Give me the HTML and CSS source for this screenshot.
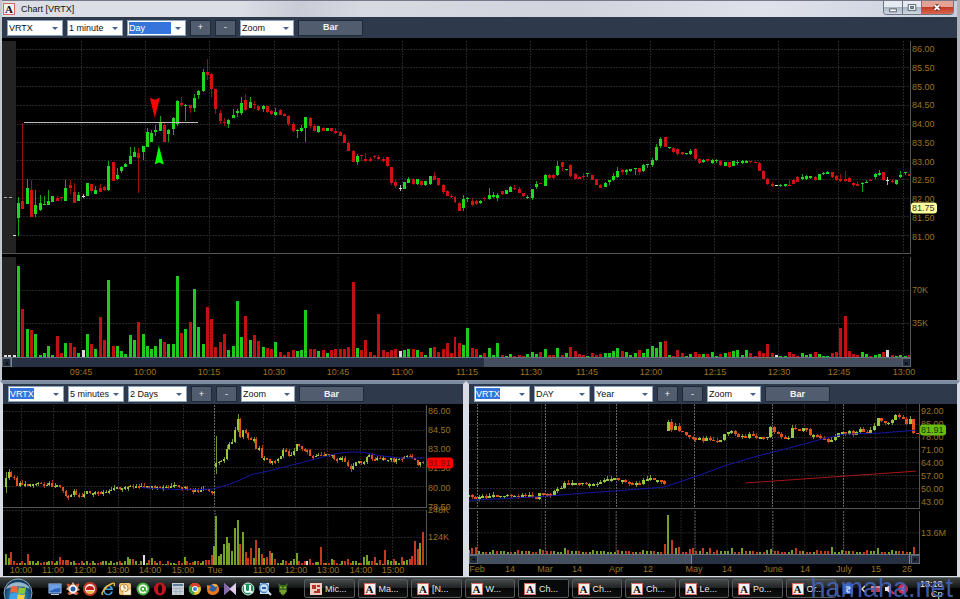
FILE: index.html
```html
<!DOCTYPE html>
<html lang="en">
<head>
<meta charset="utf-8">
<title>Chart [VRTX]</title>
<link rel="stylesheet" href="styles.css">
</head>
<body>
<main class="window">
  <header class="titlebar">
    <span class="app-icon">A</span>
    <h1>Chart [VRTX]</h1>
    <div class="window-buttons">
      <button class="win" aria-label="Minimize"><svg viewBox="0 0 19 13"><rect x="6" y="8" width="7" height="3" fill="#fff" stroke="#555f6c"/></svg></button>
      <button class="win" aria-label="Restore"><svg viewBox="0 0 19 13"><rect x="5.500" y="3.500" width="8" height="6" fill="#fff" stroke="#555f6c"/><rect x="8" y="5.500" width="3" height="2" fill="#8c98a6" stroke="#555f6c"/></svg></button>
      <button class="win close" aria-label="Close"><svg viewBox="0 0 32 13"><path d="M13 4l5 5M18 4l-5 5" stroke="#6b2a24" stroke-width="4"/><path d="M13 4l5 5M18 4l-5 5" stroke="#fff" stroke-width="2"/></svg></button>
    </div>
  </header>
  <form class="toolbar">
    <label class="combo"><select aria-label="Symbol"><option>VRTX</option></select></label>
    <label class="combo"><select aria-label="Interval"><option>1 minute</option></select></label>
    <label class="combo wide focused"><select aria-label="Range"><option>Day</option></select></label>
    <button type="button" class="step">+</button>
    <button type="button" class="step">-</button>
    <label class="combo zoom"><select aria-label="Zoom"><option>Zoom</option></select></label>
    <button type="button" class="bar">Bar</button>
  </form>
  <section class="chart chart-main" id="main"></section>
</main>

<div class="panels">
  <section class="panel">
    <form class="toolbar">
      <label class="combo marked"><select aria-label="Symbol"><option>VRTX</option></select></label>
      <label class="combo"><select aria-label="Interval"><option>5 minutes</option></select></label>
      <label class="combo wide"><select aria-label="Range"><option>2 Days</option></select></label>
      <button type="button" class="step">+</button>
      <button type="button" class="step">-</button>
      <label class="combo zoom"><select aria-label="Zoom"><option>Zoom</option></select></label>
      <button type="button" class="bar">Bar</button>
    </form>
    <div class="chart chart-days" id="days"></div>
  </section>
  <section class="panel">
    <form class="toolbar">
      <label class="combo marked"><select aria-label="Symbol"><option>VRTX</option></select></label>
      <label class="combo"><select aria-label="Interval"><option>DAY</option></select></label>
      <label class="combo wide"><select aria-label="Range"><option>Year</option></select></label>
      <button type="button" class="step">+</button>
      <button type="button" class="step">-</button>
      <label class="combo zoom"><select aria-label="Zoom"><option>Zoom</option></select></label>
      <button type="button" class="bar">Bar</button>
    </form>
    <div class="chart chart-year" id="year"></div>
  </section>
</div>

<footer class="taskbar">
  <button class="start" aria-label="Start">
    <svg viewBox="0 0 30 30">
      <defs><radialGradient id="orb" cx=".5" cy=".6" r=".6"><stop offset="0" stop-color="#49b7ea"/><stop offset=".6" stop-color="#1f5f92"/><stop offset="1" stop-color="#0d2b49"/></radialGradient></defs>
      <circle cx="15" cy="15" r="14" fill="url(#orb)" stroke="#8fa9b8"/>
      <path d="M3 11C6 2 24 2 27 11C19 7 11 8 3 11z" fill="#cfe2ec" opacity=".7"/>
      <path d="M8 9q4-2 7 0l-1 6q-3-2-7 0z" fill="#e8683a"/>
      <path d="M16 9q4 2 7 0l-1 6q-4 2-7 0z" fill="#8cc63e"/>
      <path d="M7 16q4-2 7 0l-1 6q-3-2-7 0z" fill="#3fa0e6"/>
      <path d="M15 16q3 2 7 0l-1 6q-4 2-7 0z" fill="#fbd03c"/>
    </svg>
  </button>
  <nav class="quick" aria-label="Quick launch">
    <svg viewBox="0 0 14 14"><rect x="1" y="2" width="12" height="9" fill="#2d62b8" stroke="#9fc4ee"/><path d="M2 3h10v3q-5 0-10 3z" fill="#6ba0e4"/><path d="M3 12.500h8" stroke="#b9d0e8"/></svg>
    <svg viewBox="0 0 14 14"><path d="M7 0l2 3 4-1-1 4 2 2-3 1 0 4-4-1-4 1 0-4-3-2 2-2-1-3 4 1z" fill="#e8a888"/><circle cx="7" cy="7" r="4" fill="#fff"/><circle cx="7" cy="7" r="2.500" fill="#265fa8"/><path d="M1 2l3 2M13 2l-3 2M2 12l2-2M12 12l-2-2" stroke="#d84a28" stroke-width="2"/></svg>
    <svg viewBox="0 0 14 14"><circle cx="7" cy="7" r="6" fill="#f4e8dc" stroke="#c33a26" stroke-width="2"/><path d="M3 8a4 4 0 0 1 8 0z" fill="#b9201c"/><path d="M3 9h8l-3 3H6z" fill="#e9b83c"/></svg>
    <svg viewBox="0 0 14 14"><path d="M12 8H4a3 3 0 0 0 6 1.500h2A5 5 0 1 1 12 7z" fill="#3f9fe8"/><path d="M4.500 6.500h5a2.500 2.500 0 0 0-5 0z" fill="#0a0c10"/><path d="M2 12C-1 14 3 5 10 2c4-2 4 0 3 2" fill="none" stroke="#edb93e" stroke-width="1.500"/></svg>
    <svg viewBox="0 0 14 14"><rect x="1" y="1" width="12" height="12" rx="2" fill="#f0c678"/><circle cx="6" cy="6" r="4" fill="#fff7df" stroke="#c98a3a"/><path d="M6 3v3h2" fill="none" stroke="#b2661a"/><path d="M5 8l3 2 5-4v7H5z" fill="#fff3d0" stroke="#bd7a2a" stroke-width=".5"/></svg>
    <svg viewBox="0 0 14 14"><circle cx="7" cy="7" r="6.500" fill="#45b23b"/><circle cx="7" cy="7" r="4.500" fill="#fff"/><circle cx="7" cy="7" r="2" fill="none" stroke="#38a530" stroke-width="1.500"/><path d="M9 5v4h2" fill="none" stroke="#38a530"/></svg>
    <svg viewBox="0 0 14 14"><ellipse cx="7" cy="7" rx="6" ry="6.500" fill="#c3161c"/><ellipse cx="7" cy="7" rx="2" ry="4.500" fill="#140506"/></svg>
    <svg viewBox="0 0 14 14"><rect x="1" y="1" width="12" height="12" fill="#c7d0d8"/><path d="M2 2h10v2H2z" fill="#5f7d98"/><path d="M2 6.500h10M2 9.500h10M5 5v8M9 5v8" stroke="#a4b0bb"/></svg>
    <svg viewBox="0 0 14 14"><circle cx="7" cy="7" r="6" fill="#e8c733"/><path d="M7 7L2 3.500A6 6 0 0 1 12.500 4.500z" fill="#d93d2e"/><path d="M7 7L2 3.500A6 6 0 0 0 6 13z" fill="#3f9e44"/><circle cx="7" cy="7" r="3" fill="#fff"/><circle cx="7" cy="7" r="2" fill="#3d7fd6"/></svg>
    <svg viewBox="0 0 14 14"><circle cx="7" cy="7" r="5" fill="#2c5fa8"/><path d="M1 3q3 0 4 2l-2 2q2 4 6 2 3-3 1-7 4 3 3 7-2 4-6 4-6 0-6-6z" fill="#e8771d"/><path d="M6 2q4-1 6 2l-3 1z" fill="#f6ad3b"/></svg>
    <svg viewBox="0 0 14 14"><path d="M1 1l6 5 6-5v12L7 8l-6 5z" fill="#b49ac8"/><path d="M1 1l6 6-6 6z" fill="#8667a8"/><path d="M13 1L7 7l6 6z" fill="#dacbe6"/></svg>
    <svg viewBox="0 0 14 14"><circle cx="7" cy="7" r="6" fill="#1e8f5f" stroke="#d8eee2"/><path d="M4 3v5q0 2 2.500 2T9 8V3M9 9q1 2 3 1" fill="none" stroke="#fff" stroke-width="2"/></svg>
    <svg viewBox="0 0 14 14"><rect x="2" y="1" width="9" height="11" fill="#d8e7f3"/><circle cx="6" cy="6" r="4.500" fill="#c5def4" stroke="#4c8ac8" stroke-width="1.500"/><path d="M4 6h4" stroke="#27639f" stroke-width="2"/><path d="M9 9l4 4" stroke="#d7e5f0" stroke-width="2"/></svg>
    <svg viewBox="0 0 14 14"><path d="M2 1l3 2h4l3-2-1 4v5l-4 4-4-4V5z" fill="#3c6a1f"/><path d="M4 5l2 1M10 5L8 6M4 9h6M5 11h4" stroke="#b2d43c"/></svg>
  </nav>
  <nav class="tasks" aria-label="Running programs">
    <button class="task"><svg class="task-icon" viewBox="0 0 12 12"><rect width="12" height="12" fill="#f3c8bf"/><path d="M2 2h4v4H2zM7 2h3v2H7zM7 6h3v4H4V8h3z" fill="#b83228"/></svg>Mic...</button>
    <button class="task"><span class="app-icon">A</span>Ma...</button>
    <button class="task"><span class="app-icon">A</span>[N...</button>
    <button class="task"><span class="app-icon">A</span>W...</button>
    <button class="task active"><span class="app-icon">A</span>Ch...</button>
    <button class="task"><span class="app-icon">A</span>Ch...</button>
    <button class="task"><span class="app-icon">A</span>Ch...</button>
    <button class="task"><span class="app-icon">A</span>Le...</button>
    <button class="task"><span class="app-icon">A</span>Po...</button>
    <button class="task"><span class="app-icon">A</span>Or...</button>
  </nav>
  <div class="tray">
    <svg class="tray-icons" viewBox="0 0 70 14"><rect x="1" y="2" width="10" height="10" fill="#2b70d0"/><path d="M4 5h4v2H5v3h3" fill="none" stroke="#fff"/><path d="M23 4l-3 3 3 3" fill="none" stroke="#ddd" stroke-width="1.500"/><path d="M29 4h9v6h-9z" fill="#c33b48"/><path d="M29 5h9" stroke="#ddd"/><path d="M43 5h2l4-3v10l-4-3h-2z" fill="#e8e8ee"/><path d="M49 9l3 3" stroke="#e2303c" stroke-width="2"/><circle cx="61" cy="7" r="5" fill="#d02850"/><circle cx="61" cy="7" r="2" fill="#8b9bd6"/></svg>
    <time class="clock">13:18<br>Ср</time>
  </div>
  <span class="watermark">hamaha.net</span>
</footer>
<script src="charts.js"></script>
</body>
</html>
```
FILE: styles.css
```css
* { box-sizing: border-box; }

body {
  margin: 0;
  height: 100vh;
  display: grid;
  grid-template-rows: 381fr 196fr 22px;
  background: #000;
  color: #111;
  font: 9px/12px "Liberation Sans", sans-serif;
  overflow: hidden;
}

button, select { font: inherit; margin: 0; }

.window {
  display: flex;
  flex-direction: column;
  min-height: 0;
  border-left: 2px solid #c3c7ce;
  border-right: 3px solid #aeb2b9;
  border-bottom: 1px solid #8997ab;
}

.titlebar {
  display: flex;
  align-items: center;
  gap: 6px;
  height: 17px;
  padding-left: 1px;
  border-top: 1px solid #77798b;
  background: linear-gradient(100deg, #dcdee6 0 25%, #c9ccd6 31%, #d8dae2 38%, #d2d4dd 60%, #dfe2ea 80%, #c9d0dc);
}

.titlebar h1 { margin: 0; flex: 1; font-size: 9px; font-weight: 400; }

.app-icon {
  flex: none;
  width: 12px;
  height: 12px;
  border: 1px solid #d66a62;
  background: #f7f0ef;
  color: #111;
  font: bold 11px/11px "Liberation Serif", serif;
  text-align: center;
}

.window-buttons {
  display: flex;
  align-self: flex-start;
  margin-right: 3px;
  border: 1px solid #6c7683;
  border-top: 0;
  border-radius: 0 0 4px 4px;
  overflow: hidden;
}

.win {
  width: 19px;
  height: 13px;
  padding: 0;
  border: 0;
  border-right: 1px solid #6c7683;
  background: linear-gradient(#e6ebf1 45%, #aab6c4 50%, #cfd9e3);
}
.win svg { display: block; width: 100%; height: 100%; }
.win.close { width: 31px; border: 0; background: linear-gradient(#e3a294 45%, #c03c26 50%, #d9684c); }

.toolbar {
  display: flex;
  align-items: center;
  gap: 4px;
  flex: none;
  height: 21px;
  padding: 0 5px;
  background: #2e3a4b;
}

.combo {
  position: relative;
  width: 56px;
  height: 16px;
  border: 1px solid #8ba3bf;
  background: #fff;
}
.combo.wide { width: 59px; }
.combo.zoom { width: 54px; }
.combo select {
  display: block;
  width: 100%;
  height: 14px;
  padding: 0 0 0 1px;
  border: 0;
  border-radius: 0;
  appearance: none;
  background: transparent;
  color: #111;
  line-height: 14px;
}
.combo::after {
  content: "";
  position: absolute;
  right: 4px;
  top: 6px;
  border: 3px solid transparent;
  border-top-color: #46618f;
  border-bottom: 0;
}
.focused select { background: linear-gradient(#3475dc, #3475dc) 1px 1px / 42px 12px no-repeat; color: #fff; }
.marked select { background: linear-gradient(#3475dc, #3475dc) 1px 1px / 24px 11px no-repeat; color: #fff; }

.step, .bar {
  height: 16px;
  padding: 0;
  border: 1px solid #1f2937;
  border-radius: 0;
  background: #515d6e;
  color: #f2f4f7;
  line-height: 13px;
}
.step { width: 21px; }
.bar { width: 65px; font-weight: 700; }

.chart {
  flex: 1;
  display: grid;
  min-height: 0;
  background: #000;
}
.chart-main { grid-template: 213fr 3px 100fr 10px 13px / 1fr 46px; padding-top: 3px; }
.chart-days { grid-template: 103fr 2px 55fr 11px / 1fr 36px; padding-top: 1px; }
.chart-year { grid-template: 104fr 2px 43fr 10px 12px / 1fr 37px; }

.plot {
  grid-column: 1;
  display: block;
  width: 100%;
  height: 100%;
  min-height: 0;
  border-right: 1px solid #555;
  shape-rendering: crispEdges;
}
.plot.price { grid-row: 1; border-bottom: 1px solid #555; }
.plot.volume { grid-row: 3; }
.grid { stroke: #262626; stroke-dasharray: 2 1; fill: none; }
.grid.bright { stroke: #6a6a6a; }
.average { fill: none; shape-rendering: auto; }

.axis { position: relative; grid-column: 2; color: #9b7320; }
.axis.price { grid-row: 1; }
.axis.volume { grid-row: 3; }
.axis span { position: absolute; left: 1px; transform: translateY(-50%); white-space: nowrap; }
.axis .last { left: 0; padding: 0 2px 0 1px; border-radius: 3px; line-height: 11px; z-index: 1; }
.last.yellow { background: #ffff9c; color: #333; }
.last.red { background: #f00; color: #7a0c0c; }
.last.green { background: #68bd0c; color: #16360a; }

.times { position: relative; grid-column: 1; color: #9b7320; }
.times span { position: absolute; transform: translateX(-50%); line-height: 11px; white-space: nowrap; }

.scroll {
  grid-column: 1;
  grid-row: 4;
  display: flex;
  border-top: 1px solid #66717f;
  background: #444f60;
}
.scroll i { display: block; border-left: 1px solid #7b8796; background: #263143; }
.scroll i.gap { border: 0; background: none; }
.scroll button {
  flex: none;
  width: 9px;
  height: 9px;
  padding: 0;
  border: 1px solid #5b6675;
  background: #202a39;
  color: #05080d;
  font-size: 6px;
  line-height: 6px;
}

.panels {
  display: grid;
  grid-template-columns: 466fr 494fr;
  min-height: 0;
  background: #d7dce5;
}
.panel {
  display: flex;
  flex-direction: column;
  min-width: 0;
  min-height: 0;
  border: 3px solid #d7dce5;
  border-top-color: #7d8ca1;
  border-bottom-width: 1px;
}
.panel .toolbar { height: 20px; }

.taskbar {
  position: relative;
  display: flex;
  align-items: center;
  border-top: 1px solid #646a6a;
  background: linear-gradient(#3b4040, #151818 45%, #000 50%);
  color: #eee;
  overflow: hidden;
}
.start { flex: none; align-self: flex-start; width: 30px; height: 30px; margin: 0 14px 0 3px; padding: 0; border: 0; background: none; }
.start svg { display: block; }
.quick { display: flex; flex: none; width: 243px; justify-content: space-between; padding-left: 1px; }
.quick svg { width: 14px; height: 14px; }
.tasks { display: flex; gap: 3px; margin-left: 14px; flex: 1; min-width: 0; max-width: 532px; }
.task {
  display: flex;
  align-items: center;
  gap: 3px;
  flex: 1;
  min-width: 0;
  height: 19px;
  padding: 0 5px;
  border: 1px solid #555b5b;
  border-radius: 2px;
  background: linear-gradient(#444949, #202323 45%, #050606 50%, #111);
  color: #e8e8e8;
}
.task.active { background: #08090a; }
.task-icon { width: 12px; height: 12px; flex: none; }
.tray { display: flex; align-items: center; gap: 8px; margin-left: 6px; }
.tray-icons { width: 70px; height: 14px; }
.clock { line-height: 10px; text-align: right; }
.watermark {
  position: absolute;
  right: 7px;
  bottom: 0;
  color: #4560b4;
  font: 27px/22px "Liberation Sans", sans-serif;
  opacity: .9;
}
```
FILE: charts.js
```js
const NS = "http://www.w3.org/2000/svg";

function add(parent, tag, attrs) {
  const node = document.createElementNS(NS, tag);
  for (const key in attrs) node.setAttribute(key, attrs[key]);
  parent.appendChild(node);
  return node;
}

/* A pane is one scaled drawing area: box is [x, y, width, height]. */
function pane(host, kind, box, xs, bright, ys) {
  const svg = add(host, "svg", { class: "plot " + kind, viewBox: box.join(" "), preserveAspectRatio: "none" });
  const [x0, y0, w, h] = box;
  ys.forEach(y => add(svg, "path", { class: "grid", d: `M${x0} ${Math.floor(y) + .5}H${x0 + w}` }));
  xs.forEach(x => add(svg, "path", { class: "grid", d: `M${Math.floor(x) + .5} ${y0}V${y0 + h}` }));
  bright.forEach(x => add(svg, "path", { class: "grid bright", d: `M${Math.floor(x) + .5} ${y0}V${y0 + h}` }));
  return svg;
}

function axis(host, kind, box, labels, last) {
  const div = document.createElement("div");
  div.className = "axis " + kind;
  labels.concat(last ? [last] : []).forEach(([y, text, tone]) => {
    const s = document.createElement("span");
    s.textContent = text;
    if (tone) s.className = "last " + tone;
    s.style.top = (y - box[1]) / box[3] * 100 + "%";
    div.appendChild(s);
  });
  host.appendChild(div);
}

function times(host, box, labels, row) {
  const div = document.createElement("div");
  div.className = "times";
  div.style.gridRow = row;
  labels.forEach(([x, text]) => {
    const s = document.createElement("span");
    s.textContent = text;
    s.style.left = (x - box[0]) / box[2] * 100 + "%";
    div.appendChild(s);
  });
  host.appendChild(div);
}

/* parts: [grow, isThumb] */
function scroll(host, parts) {
  const div = document.createElement("div");
  div.className = "scroll";
  const btn = t => { const b = document.createElement("button"); b.textContent = t; b.ariaLabel = "Scroll"; div.appendChild(b); };
  btn("◂");
  parts.forEach(([grow, thumb]) => {
    const i = document.createElement("i");
    if (!thumb) i.className = "gap";
    i.style.flex = grow;
    div.appendChild(i);
  });
  btn("▸");
  host.appendChild(div);
}

function rect(svg, x, y, w, h, fill, opacity) {
  add(svg, "rect", { x, y, width: w, height: h, fill, opacity: opacity || 1 });
}

function candle(svg, x, hi, top, bottom, lo, w, fill) {
  const left = Math.round(x - w / 2), t = Math.round(top);
  rect(svg, left + Math.floor(w / 2), Math.round(hi), 1, Math.max(1, Math.round(lo) - Math.round(hi)), fill, .75);
  rect(svg, left, t, w, Math.max(1, Math.round(bottom) - t), fill);
}

/* ---------- one minute ---------- */
/* Rows: colour, high, body top, body bottom, low, in thirds of a unit below the base. */
const minute = [
[60, `g 415 433 476 530,r 190 427 450 450,g 360 387 435 435,r 362 393 474 474,g 393 438 465 473,g 407 433 453 456,g 410 434 437 437,g 393 427 437 437,g 411 411 430 430,r 411 416 426 426,r 414 415 418 427,g 362 387 425 425,r 362 377 388 405,r 373 400 432 432,g 400 408 427 427,w 404 410 412 418,g 373 373 410 412,r 374 375 397 402,g 380 392 404 404,r 374 386 398 398,r 381 385 394 396,g 306 321 394 397,r 308 308 365 366,g 328 347 361 363,g 322 324 336 343,g 311 314 324 324,g 261 291 314 314,g 260 278 293 293,r 268 281 298 402,g 258 258 280 304,g 203 216 261 261,g 210 218 245 245,g 196 209 215 228,g 168 187 212 213,r 185 195 245 245,g 207 209 221 245,g 172 174 207 224,g 121 123 192 199,r 112 128 135 140,g 133 135 138 182,r 135 135 144 158,g 101 114 144 155,g 89 94 105 116,g 28 36 94 96,r -2 36 46 60,r 38 41 87 110,r 88 88 147 163,r 150 158 183 192,r 174 186 188 197,g 176 179 192 204`],
[80, `g 88 104 114 115,g 88 93 100 112,g 50 68 98 105,r 43 61 90 92,g 50 66 84 84,r 64 71 76 88,r 77 77 90 94,g 74 79 88 97,r 77 79 97 98,r 90 94 102 104,g 84 97 104 108,r 88 90 104 104,r 100 103 108 108,r 104 107 131 137,r 127 131 154 156,g 146 149 152 173,g 134 144 154 156,g 110 110 144 186,r 112 114 138 147,r 132 137 153 154,g 138 139 155 158,r 140 143 153 154,g 143 144 152 153,r 143 144 153 155,r 144 152 158 162,r 153 155 167 168,r 163 165 188 189,r 182 190 216 216,r 213 215 248 249,g 225 230 249 257,r 227 228 232 247,r 223 239 246 248,r 235 239 246 250,r 227 230 235 241,r 227 235 239 244,r 234 239 246 249,r 233 234 262 263,r 263 264 312 317,r 304 308 322 328,w 318 327 329 336,g 308 309 329 331,g 294 299 312 313,r 298 300 315 318,g 299 300 315 319,r 303 305 319 320,g 305 307 319 320,g 290 292 316 319,r 279 292 302 304,r 296 297 318 320,r 316 317 339 345,r 334 336 350 352,r 344 350 353 357,r 350 353 368 372,r 370 371 395 396,g 347 359 388 395`],
[120, `g 233 237 240 250,r 238 245 258 262,r 243 246 256 258,g 242 245 253 255,r 234 236 239 246,g 208 227 241 244,g 220 229 234 236,g 223 227 237 246,r 215 217 226 228,g 212 213 225 226,g 200 204 219 219,r 198 206 210 214,r 204 209 221 223,r 221 223 231 234,g 229 233 238 240,g 209 210 237 243,g 187 195 205 211,r 191 193 196 196,g 165 167 201 201,r 164 167 177 181,r 166 167 178 180,g 125 140 168 170,r 128 129 144 157,g 149 150 154 155,r 135 137 171 173,r 163 166 180 181,r 170 173 179 180,r 162 170 175 180,g 161 162 165 175,r 167 167 183 184,r 180 181 197 199,r 195 197 207 207,g 190 192 203 205,g 183 184 188 198,g 162 171 184 186,g 145 156 174 176,r 150 153 160 167,g 150 153 160 168,g 149 150 157 159,g 146 148 151 168,r 146 148 160 168,g 134 138 157 159,g 134 135 139 148,g 118 123 137 144,g 71 80 124 125,g 51 57 79 86,r 50 51 82 84,g 82 83 87 89,r 84 86 98 103,r 86 90 105 108,r 98 99 106 108,g 101 102 106 107,g 90 96 105 107,r 88 91 121 124,r 118 120 132 134`],
[0, `g 480 482 489 493,r 480 480 487 488,g 480 483 493 494,g 479 484 487 491,r 484 485 499 502,g 489 490 501 502,r 488 489 503 508,g 485 487 501 502,g 484 488 491 499,g 484 486 491 495,g 483 486 491 493,r 485 487 490 491,r 486 488 492 492,r 490 491 515 517,r 512 515 539 541,r 537 541 555 558,r 550 554 560 564,w 557 558 560 562,g 555 557 561 564,g 554 556 562 564,r 543 558 560 562,r 541 544 555 556,r 531 533 549 550,g 524 534 540 544,g 529 532 540 543,g 531 532 537 540,r 531 533 544 545,g 524 526 543 544,g 520 522 525 528,g 515 519 524 526,r 518 520 535 537,r 528 530 542 545,r 525 540 546 548,r 517 540 546 550,r 533 536 548 550,r 549 552 557 563,r 547 554 560 562,g 549 551 555 580,g 543 548 550 553,r 539 542 545 547,g 522 524 535 539,g 514 521 527 530,r 518 520 542 546,w 535 543 545 558,r 541 546 549 553,g 542 544 555 557,g 515 527 534 536,g 518 520 522 528,r 524 525 530 532`]];
const minuteVolume = [48,177,237,241,251,315,309,288,315,258,309,279,279,290,309,300,251,281,298,202,270,89,288,287,303,312,255,269,217,251,289,297,289,268,277,283,281,78,249,237,215,116,231,282,170,206,291,276,252,300,288,152,262,197,270,254,274,291,293,297,276,306,314,306,301,302,301,181,296,298,303,301,309,300,298,298,298,290,97,295,300,269,306,315,193,299,306,301,298,304,300,298,296,300,306,314,295,290,305,296,280,308,262,279,285,235,293,296,315,309,294,315,280,314,318,311,317,314,317,312,306,313,305,297,314,316,295,315,308,291,303,313,314,317,308,314,313,310,308,303,294,304,306,314,309,300,308,297,288,295,276,273,314,318,299,310,318,313,305,313,311,313,307,318,313,308,305,303,300,315,300,310,317,304,310,282,308,315,317,317,306,311,317,308,314,311,306,311,317,317,308,306,234,198,302,312,316,307,313,317,316,311,305,300,316,317,316,317,314];

(function () {
  const host = document.getElementById("main");
  const pbox = [2, 41, 909, 213], vbox = [2, 257, 909, 100];
  const ticks = [[81, "09:45"], [145, "10:00"], [209, "10:15"], [274, "10:30"], [338, "10:45"], [402, "11:00"], [467, "11:15"], [531, "11:30"], [587, "11:45"], [651, "12:00"], [715, "12:15"], [779, "12:30"], [839, "12:45"], [904, "13:00"]];
  const xs = [8].concat(ticks.map(t => t[0]));
  const prices = Array.from({ length: 11 }, (_, k) => [49 + k * 18.75, (86 - k / 2).toFixed(2)]);
  const ink = { g: "#1fd91f", r: "#d01212", w: "#e8e8e8" };
  const p = pane(host, "price", pbox, xs, [], prices.map(v => v[0]));
  const v = pane(host, "volume", vbox, xs, [], [290, 323]);
  rect(p, 2, 41, 14, 213, "#232323");
  rect(v, 2, 257, 14, 100, "#232323");
  [4, 9].forEach(x => rect(p, x, 198, 3, 1, "#aaa"));
  rect(p, 13, 236, 3, 1, "#ddd");
  [4, 8, 13].forEach(x => rect(v, x, 355, 3, 2, "#ddd"));
  let i = 0;
  minute.forEach(([base, rows]) => rows.split(",").forEach(row => {
    const [c, ...n] = row.split(" ");
    const [hi, top, bottom, lo] = n.map(y => base + y / 3);
    const x = 18.7 + i * 4.287;
    candle(p, x, hi, top, bottom, lo, 3, ink[c]);
    const y = Math.round(250 + minuteVolume[i] / 3);
    rect(v, Math.round(x - 1.5), y, 3, 357 - y, ink[c], .93);
    i++;
  }));
  rect(p, 24, 122, 174, 1, "#bdbdbd");
  add(p, "path", { d: "M150 98l5 2 5-2-5 20z", fill: "#f00", "shape-rendering": "auto" });
  add(p, "path", { d: "M159 146l5 19-5-2-4 2z", fill: "#0f0", "shape-rendering": "auto" });
  axis(host, "price", pbox, prices, [208, "81.75", "yellow"]);
  axis(host, "volume", vbox, [[290, "70K"], [323, "35K"]]);
  scroll(host, [[471, true], [418, false]]);
  times(host, pbox, ticks, 5);
})();

/* Candles from a run of closes; the open is the previous close. */
function run(svg, x0, step, base, open, closes, up, down, w, wicks) {
  closes.forEach((close, i) => {
    const k = (i * 37 + closes.length) % 11;
    const top = Math.min(open, close), bottom = Math.max(open, close, top + 5);
    const [hi, lo] = (wicks && wicks[i]) || [top - (k % 4) * 3, bottom + (k % 3) * 3];
    candle(svg, x0 + i * step, base + hi / 3, base + top / 3, base + bottom / 3, base + lo / 3, w, close <= open ? up : down);
    open = close;
  });
}
function line(svg, pts, stroke) {
  add(svg, "polyline", { class: "average", points: pts.map(q => q.join(",")).join(" "), stroke });
}

/* ---------- five minutes ---------- */
(function () {
  const host = document.getElementById("days");
  const pbox = [3, 405, 424, 103], vbox = [3, 510, 424, 55];
  const ticks = [[21, "10:00"], [53, "11:00"], [85, "12:00"], [118, "13:00"], [150, "14:00"], [183, "15:00"], [215, "Tue"], [264, "11:00"], [296, "12:00"], [328, "13:00"], [361, "14:00"], [393, "15:00"]];
  const xs = ticks.map(t => t[0]).filter(x => x !== 215);
  const p = pane(host, "price", pbox, xs, [215], [411, 430, 449, 468, 487]);
  const v = pane(host, "volume", vbox, xs, [215], [510, 537]);
  const mon = [297,278,293,298,320,312,316,315,316,316,315,314,311,316,317,317,313,325,320,318,323,337,352,353,348,337,348,350,355,345,337,342,342,339,340,341,339,338,336,332,326,325,328,328,325,325,320,321,321,322,320,323,322,323,322,324,323,324,324,323,324,322,318,317,324,326,323,329,333,335,333,335,334,329,330,336,340,338];
  const tue = [252,248,245,240,208,192,187,150,118,170,150,158,175,178,177,207,205,238,237,240,252,246,247,240,232,210,213,230,225,212,193,198,208,210,211,232,235,228,224,226,228,222,230,226,240,243,238,238,250,262,270,262,250,247,253,250,235,224,240,244,236,240,238,243,242,236,248,240,239,241,235,230,231,238,243,257,248,251];
  run(p, 6, 2.705, 380, 323, mon, "#98c83e", "#e0541c", 2, { 0: [280, 343], 1: [270, 302] });
  run(p, 217, 2.69, 380, 265, tue, "#98c83e", "#e0541c", 2, { 0: [168, 285], 4: [195, 242], 8: [103, 155], 9: [115, 175], 50: [255, 280] });
  const monVol = [518,531,513,541,545,547,541,545,518,541,540,546,541,545,544,542,540,541,545,541,528,538,537,536,543,541,545,545,541,547,541,545,541,545,547,543,541,541,545,541,546,543,540,546,541,527,534,534,541,548,541,522,546,536,531,541,545,541,548,548,541,546,546,548,541,545,528,541,546,543,541,541,546,541,537,536,522,495];
  const tueVol = [404,525,520,490,468,485,510,440,417,488,453,512,530,500,532,477,502,518,530,527,510,517,533,545,545,537,540,545,541,533,517,541,545,541,540,535,546,544,542,499,545,545,547,534,536,546,548,541,541,533,546,541,541,545,545,528,522,540,540,527,545,537,548,507,538,541,535,541,545,528,541,537,533,525,480,503,487,453];
  const bars = (x0, step, open, closes, tops, white) => tops.forEach((y, i) => {
    const top = Math.round(381 + y / 3), prev = i ? closes[i - 1] : open;
    rect(v, Math.round(x0 + i * step), top, 2, 565 - top, i === white ? "#ddd" : closes[i] <= prev ? "#75a126" : "#c33a1c");
  });
  bars(5, 2.705, 323, mon, monVol, 51);
  bars(216, 2.69, 265, tue, tueVol, 34);
  line(p, [[142,488.5],[160,489.5],[183,490.5],[200,490.5],[215,489.5],[230,485],[240,481],[253,475],[270,471.5],[287,467],[303,463],[320,458.5],[337,454],[350,452.5],[363,452.5],[380,456],[400,458.5],[425,458.5]], "#1717a8");
  axis(host, "price", pbox, [[411,"86.00"],[430,"84.50"],[449,"83.00"],[468,"81.50"],[488,"80.00"],[507,"78.50"]], [463, "81.91", "red"]);
  axis(host, "volume", vbox, [[510,"248K"],[537,"124K"]]);
  times(host, pbox, ticks, 4);
})();

/* ---------- daily ---------- */
(function () {
  const host = document.getElementById("year");
  const pbox = [469, 404, 451, 105], vbox = [469, 511, 451, 43];
  const bright = [477, 545, 616, 695, 773, 844];
  const xs = [510, 541, 577, 609, 648, 681, 727, 759, 805, 836, 876, 907];
  const ys = [411, 424, 437, 450, 463, 476, 489, 502];
  const p = pane(host, "price", pbox, xs, bright, ys);
  const v = pane(host, "volume", vbox, xs, bright, [532]);
  const before = [348,355,356,355,352,357,350,348,350,350,350,347,350,350,353,347,352,348,355,361,343,345,346,347,337,331,326,312,314,313,313,314,311,316,316,315,314,309,303,300,300,298,304,303,309,313,314,312,314,304,300,297,303,303,306,315];
  const after = [127,149,138,152,157,164,171,174,179,173,182,174,179,182,186,180,163,155,153,163,170,167,174,163,168,171,171,174,170,141,157,163,170,176,173,143,147,153,145,147,166,165,167,175,178,186,180,170,158,157,163,152,165,155,147,155,160,150,138,115,124,130,128,120,106,112,117,133,118,158,160,150];
  const step = 3.57, start = 468.5;
  run(p, start, step, 380, 352, before, "#98c83e", "#e0541c", 3);
  run(p, start + 56 * step, step, 380, 153, after, "#98c83e", "#e0541c", 3, { 1: [117, 156], 69: [148, 162], 71: [126, 153] });
  const peaks = { 1: 504, 2: 500, 20: 508, 27: 505, 55: 493, 56: 406, 57: 480, 58: 505, 59: 500, 62: 508, 63: 504, 66: 504, 68: 503, 74: 503, 77: 505, 85: 507, 92: 505, 102: 501, 115: 505, 125: 501, 127: 503 };
  const all = [352].concat(before, after);
  for (let i = 0; i < 126; i++) {
    const y = peaks[i] || 511 + (i * 29 % 7);
    const top = Math.round(380 + y / 3);
    rect(v, Math.round(start - 1 + i * step), top, 2, 554 - top, all[i + 1] <= all[i] ? "#75a126" : "#c33a1c");
  }
  line(p, [[469,501.5],[501,500],[544,497.5],[587,494],[617,492],[665,488],[700,476],[727,466],[757,457],[790,448.5],[823,439.5],[845,434.5],[880,433.5],[917,430.5]], "#1717a8");
  line(p, [[746,484],[917,472]], "#a81515");
  axis(host, "price", pbox, ys.map((y, k) => [y, (92 - k * 7).toFixed(2)]), [430, "81.91", "green"]);
  axis(host, "volume", vbox, [[533, "13.6M"]]);
  scroll(host, [[214, false], [218, true], [1, true]]);
  times(host, pbox, [[477,"Feb"],[510,"14"],[545,"Mar"],[577,"14"],[616,"Apr"],[648,"12"],[694,"May"],[727,"14"],[773,"June"],[805,"14"],[844,"July"],[876,"15"],[907,"26"]], 5);
})();
```
